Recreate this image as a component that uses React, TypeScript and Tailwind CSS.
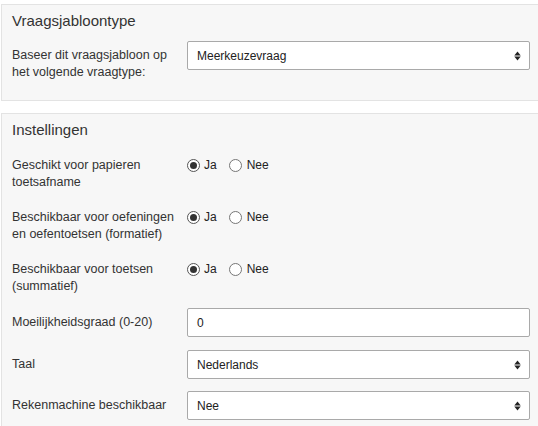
import React from 'react';

const SortIcon = () => (
  <svg width="7" height="10" viewBox="0 0 7 10" className="shrink-0">
    <polygon points="0.3,4.4 3.5,0.6 6.7,4.4" fill="#222" />
    <polygon points="0.3,5.6 6.7,5.6 3.5,9.4" fill="#222" />
  </svg>
);

const Radio: React.FC<{ checked?: boolean }> = ({ checked }) => (
  <span
    className={`flex h-[13px] w-[13px] shrink-0 items-center justify-center rounded-full border bg-white ${
      checked ? 'border-[#555]' : 'border-[#767676]'
    }`}
  >
    {checked && <span className="h-[7px] w-[7px] rounded-full bg-[#333]" />}
  </span>
);

const SelectBox: React.FC<{ value: string }> = ({ value }) => (
  <div className="flex h-[29px] flex-1 items-center justify-between rounded-[2px] border border-[#a9a9a9] bg-white pl-[9px] pr-[8px] text-[12px] text-[#222]">
    <span>{value}</span>
    <SortIcon />
  </div>
);

const YesNo = () => (
  <div className="flex h-[17px] items-center text-[12px] text-[#222]">
    <label className="flex items-center gap-[4px]">
      <Radio checked />
      <span>Ja</span>
    </label>
    <label className="ml-[12px] flex items-center gap-[5px]">
      <Radio />
      <span>Nee</span>
    </label>
  </div>
);

const RadioRow: React.FC<{ label: string; className?: string }> = ({ label, className }) => (
  <div className={`flex items-start ${className ?? ''}`}>
    <div className="w-[175px] shrink-0 pr-[8px] text-[12.5px] leading-[17px]">{label}</div>
    <YesNo />
  </div>
);

export default function App() {
  return (
    <div
      className="h-[426px] w-[538px] overflow-hidden bg-white pl-[1px] pt-[4px] text-[#333]"
      style={{ fontFamily: '"Liberation Sans", Arial, sans-serif' }}
    >
      {/* Vraagsjabloontype */}
      <div className="w-[538px] border border-[#e3e3e3] bg-[#f7f7f7] pb-[19.5px] pl-[10px] pr-[8px] pt-[6px]">
        <h2 className="text-[15px] leading-[20px] text-[#333]">Vraagsjabloontype</h2>
        <div className="mt-[10px] flex items-start">
          <div className="w-[175px] shrink-0 pr-[8px] pt-[5.5px] text-[12.5px] leading-[17px]">
            Baseer dit vraagsjabloon op het volgende vraagtype:
          </div>
          <SelectBox value="Meerkeuzevraag" />
        </div>
      </div>

      {/* Instellingen */}
      <div className="mt-[12px] h-[330px] w-[538px] border border-[#e3e3e3] bg-[#f7f7f7] pl-[10px] pr-[8px] pt-[6px]">
        <h2 className="text-[15px] leading-[20px] text-[#333]">Instellingen</h2>
        <RadioRow className="mt-[16.5px]" label="Geschikt voor papieren toetsafname" />
        <RadioRow className="mt-[18px]" label="Beschikbaar voor oefeningen en oefentoetsen (formatief)" />
        <RadioRow className="mt-[18px]" label="Beschikbaar voor toetsen (summatief)" />

        <div className="mt-[13.5px] flex items-center">
          <div className="w-[175px] shrink-0 pr-[8px] text-[12.5px] leading-[17px]">Moeilijkheidsgraad (0-20)</div>
          <div className="flex h-[29px] flex-1 items-center rounded-[2px] border border-[#a9a9a9] bg-white pl-[9px] text-[12px] text-[#222]">
            0
          </div>
        </div>
        <div className="mt-[13px] flex items-center">
          <div className="w-[175px] shrink-0 pr-[8px] text-[12.5px] leading-[17px]">Taal</div>
          <SelectBox value="Nederlands" />
        </div>
        <div className="mt-[12px] flex items-center">
          <div className="w-[175px] shrink-0 pr-[8px] text-[12.5px] leading-[17px]">Rekenmachine beschikbaar</div>
          <SelectBox value="Nee" />
        </div>
      </div>
    </div>
  );
}
